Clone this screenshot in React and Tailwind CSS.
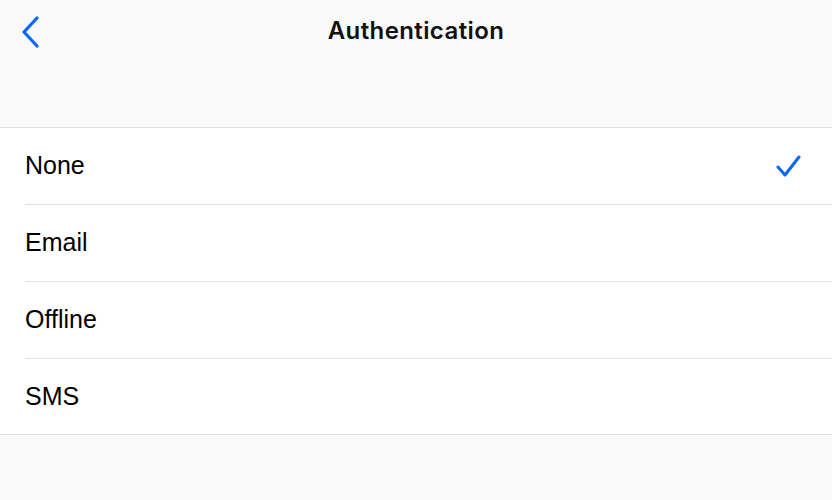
import React from 'react';

const options = ['None', 'Email', 'Offline', 'SMS'];

const App = () => {
  const selected = 'None';

  const rowsJsx = options.map((label, i) => {
    const isLast = i === options.length - 1;
    return (
      <div key={label} className="pl-[25px]">
        <div
          className={`flex items-center justify-between pr-[30px] ${
            isLast ? 'h-[75px]' : 'h-[77px] border-b border-[#e2e2e2]'
          }`}
        >
          <span className="text-[25px] text-black">{label}</span>
          {label === selected && (
            <svg width="26" height="24" viewBox="0 0 26 24" fill="none">
              <path
                d="M2 13 L9 21 L23 3"
                stroke="#0a66ff"
                strokeWidth="3"
                strokeLinecap="round"
                strokeLinejoin="round"
              />
            </svg>
          )}
        </div>
      </div>
    );
  });

  return (
    <div
      className="w-[832px] h-[500px] bg-[#f9f9f9] flex flex-col"
      style={{ fontFamily: '"Liberation Sans", Arial, sans-serif' }}
    >
      <div className="h-[127px] relative">
        <div className="h-[62px] flex items-center justify-center">
          <h1 className="text-[24px] font-semibold text-[#111] tracking-[0.4px]" style={{ fontFamily: 'Inter, sans-serif' }}>
            Authentication
          </h1>
        </div>
        <button className="absolute left-[18px] top-[14px] p-[2px]">
          <svg width="20" height="32" viewBox="0 0 20 32" fill="none">
            <path
              d="M17 2 L4 16 L17 30"
              stroke="#0a66ff"
              strokeWidth="3.2"
              strokeLinecap="round"
              strokeLinejoin="round"
            />
          </svg>
        </button>
      </div>
      <div className="bg-white border-t border-b border-[#e0e0e0]">{rowsJsx}</div>
    </div>
  );
};

export default App;
